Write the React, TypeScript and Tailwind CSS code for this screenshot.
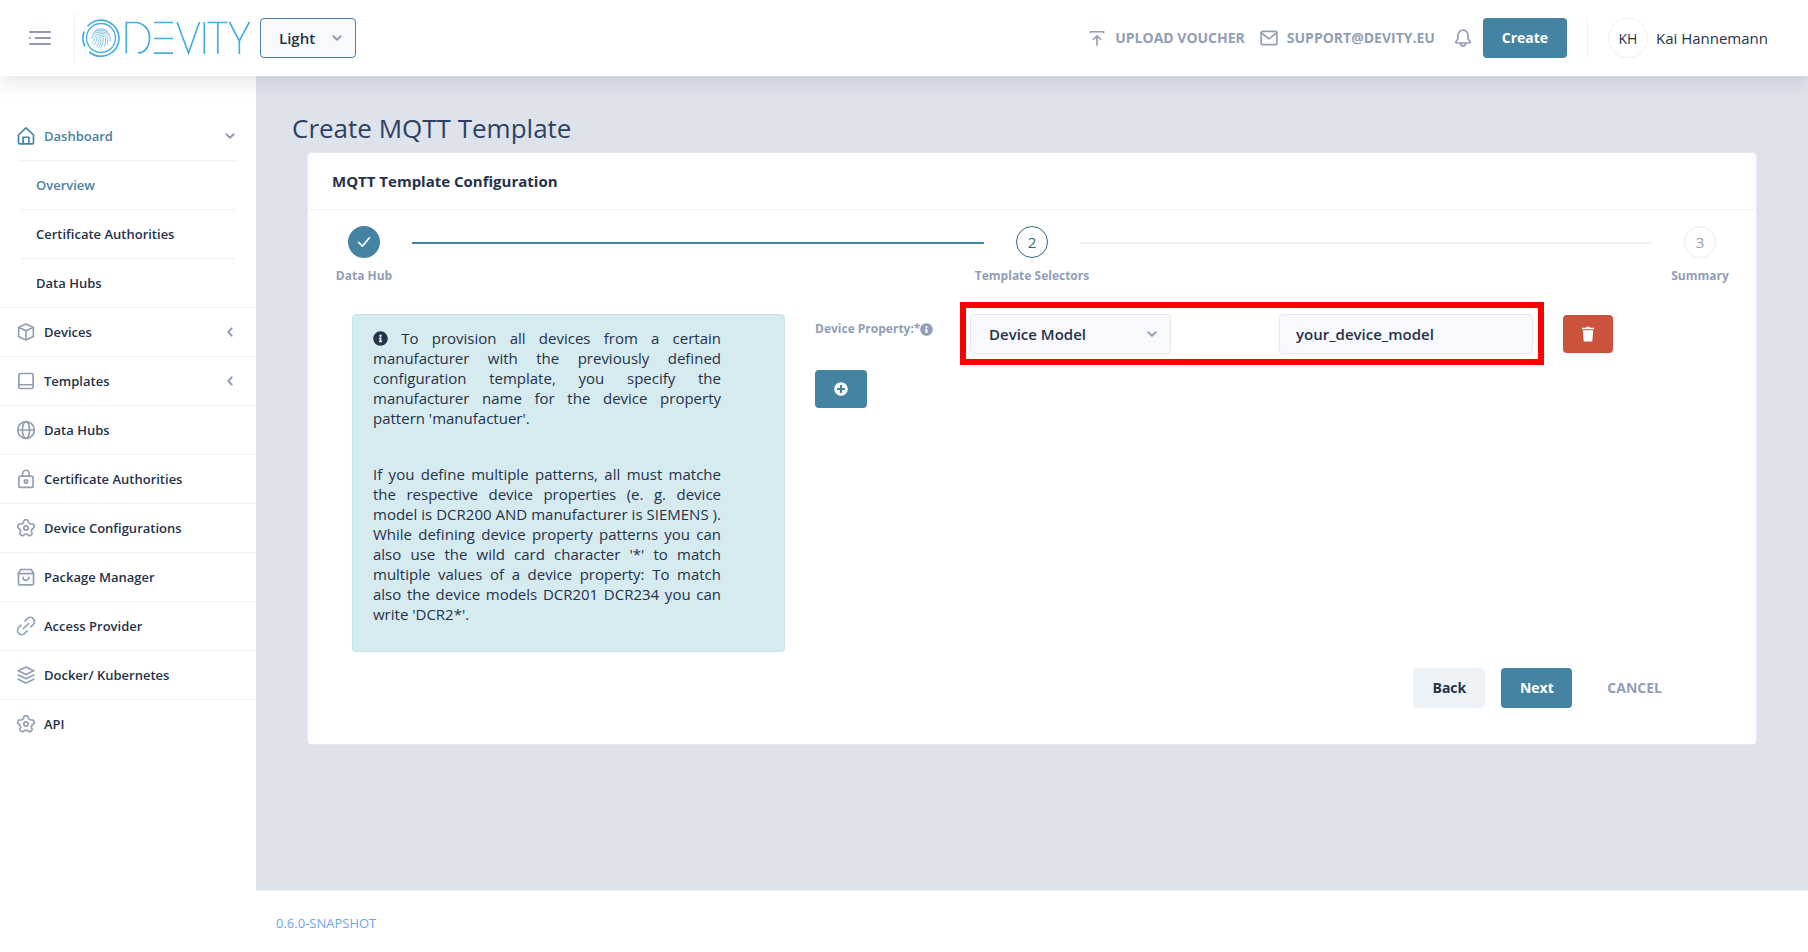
import { useState } from "react";
import type { ReactNode } from "react";
import { FaInfoCircle, FaPlusCircle } from "react-icons/fa";

type IconProps = { children: ReactNode; className?: string };

function Icon({ children, className = "size-5" }: IconProps) {
  return (
    <svg
      viewBox="0 0 24 24"
      fill="none"
      stroke="currentColor"
      strokeWidth="2"
      strokeLinecap="round"
      strokeLinejoin="round"
      aria-hidden="true"
      className={`shrink-0 ${className}`}
    >
      {children}
    </svg>
  );
}

// Outline of a five-lobed cog, sampled as a closed polyline.
const cogPoints = Array.from({ length: 90 }, (_, i) => {
  const angle = (i / 90) * Math.PI * 2;
  const wave = Math.cos(5 * angle);
  const radius = 8.7 + 1.6 * Math.tanh(1.8 * wave);
  return `${(12 + radius * Math.sin(angle)).toFixed(2)},${(12.3 - radius * Math.cos(angle)).toFixed(2)}`;
}).join(" ");

const icons = {
  home: (
    <>
      <path d="M3 10.800 12 2.200l9 8.600V20a1.500 1.500 0 0 1-1.500 1.500h-15A1.500 1.500 0 0 1 3 20z" />
      <path d="M8.500 21v-7.500h7V21" />
    </>
  ),
  cube: (
    <>
      <path d="M12 2.500 20.800 6.300v11L12 21.500 3.200 17.300v-11z" />
      <path d="M3.500 6.600 12 10.500l8.500-3.900M12 10.500V21" />
    </>
  ),
  book: (
    <>
      <rect x="3.500" y="3" width="17" height="18" rx="1.500" />
      <path d="M4 16.500h16" />
    </>
  ),
  globe: (
    <>
      <circle cx="12" cy="12" r="10" />
      <ellipse cx="12" cy="12" rx="4.300" ry="10" />
      <path d="M2.500 12h19" />
    </>
  ),
  lock: (
    <>
      <rect x="3.500" y="8.500" width="17" height="13.500" rx="2" />
      <path d="M8 8.500V5.500a4 4 0 0 1 8 0v3" />
      <circle cx="12" cy="15" r="2" />
    </>
  ),
  gear: (
    <>
      <polygon points={cogPoints} />
      <circle cx="12" cy="12" r="2.600" />
    </>
  ),
  bag: (
    <>
      <path d="M3 7.500 5.800 3h12.400L21 7.500V20a1.500 1.500 0 0 1-1.500 1.500h-15A1.500 1.500 0 0 1 3 20z" />
      <path d="M3 8h18M8.500 12.500a3.500 3.500 0 0 0 7 0" />
    </>
  ),
  link: (
    <>
      <path d="m9 15 6-6" />
      <path d="M10.800 5.800 13.500 3.200a4.900 4.900 0 0 1 7.200 7L18 13" />
      <path d="M6 11 3.300 13.800a4.900 4.900 0 0 0 7.200 7L13.200 18" />
    </>
  ),
  layers: (
    <>
      <path d="m12 2.500 9.300 4.500-9.300 4.500L2.700 7z" />
      <path d="m2.700 12 9.300 4.500 9.300-4.500" />
      <path d="m2.700 17 9.300 4.500 9.300-4.500" />
    </>
  ),
};

type NavItem = { label: string; icon: ReactNode; expandable?: boolean };

const navItems: NavItem[] = [
  { label: "Devices", icon: icons.cube, expandable: true },
  { label: "Templates", icon: icons.book, expandable: true },
  { label: "Data Hubs", icon: icons.globe },
  { label: "Certificate Authorities", icon: icons.lock },
  { label: "Device Configurations", icon: icons.gear },
  { label: "Package Manager", icon: icons.bag },
  { label: "Access Provider", icon: icons.link },
  { label: "Docker/ Kubernetes", icon: icons.layers },
  { label: "API", icon: icons.gear },
];

const subItems = ["Overview", "Certificate Authorities", "Data Hubs"];

function Logo() {
  return (
    <svg viewBox="0 0 168 38" className="h-[38px] w-[168px]" fill="none" stroke="#45aee0" role="img" aria-label="Devity">
      <path d="M5.500 7.200A18 18 0 1 1 7.300 33" strokeWidth="1.700" />
      <path d="M2.200 12.500A18 18 0 0 0 3 27.500" strokeWidth="1.700" />
      <circle cx="19" cy="19" r="14.500" strokeWidth="1.300" />
      <g stroke="#74b9dc" strokeWidth="0.900" strokeLinecap="round" strokeDasharray="5 1">
        <path d="M12.500 12.300c3.800-3.300 9.300-3.300 13 0M10.600 15.200c4-5.400 12.800-5.400 16.800 0" />
        <path d="M9.800 19.500c0-8.500 18.400-9 18.400 0v2.500M10.400 23.500c2-1 1.700-2.700 1.900-4.300.6-6.200 12.800-6.200 13.400.3.100 2 .1 4-.5 5.800" />
        <path d="M12 25.800c2.400-1.800 2.300-4 2.500-6.300.3-4 8.700-4 9 .3.100 3-.2 5.400-1.300 7.600" />
        <path d="M14.500 27.300c2-2.200 2.300-4.800 2.300-7.600.2-2 4.200-2 4.400.3.100 3.200-.6 6-2.200 8.300M17 28.300c1.500-2.300 2-5 2-8" />
      </g>
      <g strokeWidth="1.700">
        <path d="M44.300 34.500V3.500h8.700a14.500 14.500 0 0 1 14.500 15.500c0 9-5 15-11.500 15" />
        <path d="M72 3.500h19M72 19.500h19M72 34.200h19" />
        <path d="m95 3 11.500 31L117.500 3" />
        <path d="M122.300 3v32M125.500 3.500h20M135.800 3.500V35" />
        <path d="m147.500 3 9.800 19L167.500 3M157.300 22v13" />
      </g>
    </svg>
  );
}

function Chevron({ className = "size-4" }: { className?: string }) {
  return (
    <Icon className={className}>
      <path d="m6.500 9.500 5.500 5 5.500-5" strokeWidth="3" />
    </Icon>
  );
}

function Header() {
  const [theme, setTheme] = useState("Light");
  return (
    <header className="relative z-10 flex h-[76px] items-center justify-between bg-white pr-10 pl-7 shadow-[0_8px_16px_0_rgba(44,51,73,0.1)]">
      <div className="flex items-center">
        <button type="button" aria-label="Toggle menu" className="text-[#8f9bb3]">
          <svg viewBox="0 0 24 24" className="size-6" stroke="currentColor" strokeWidth="2" strokeLinecap="round" aria-hidden="true">
            <path d="M2 6h20M7.500 12H22M2 18h20M2 12h.01" />
          </svg>
        </button>
        <a href="#home" className="ml-[22px] flex h-[50px] items-center border-l border-[#edf1f5] pl-[7px]">
          <Logo />
        </a>
        <div className="relative ml-[10px]">
          <select
            aria-label="Theme"
            value={theme}
            onChange={(e) => setTheme(e.target.value)}
            className="h-10 w-24 appearance-none rounded border border-[#4583a3] bg-[#f7f9fc] pl-[18px] text-[15px] font-semibold"
          >
            <option>Light</option>
            <option>Dark</option>
          </select>
          <Chevron className="pointer-events-none absolute top-3 right-[11px] size-4 text-[#919eb5]" />
        </div>
      </div>

      <div className="flex items-center text-sm font-bold text-[#919eb5]">
        <a href="#voucher" className="flex items-center gap-2">
          <Icon>
            <path d="M4 4.500h16M4 4.500v1M20 4.500v1M12 20.500v-11M7.500 13.500 12 9.500l4.500 4" />
          </Icon>
          UPLOAD VOUCHER
        </a>
        <a href="mailto:support@devity.eu" className="ml-[14px] flex items-center gap-2">
          <Icon>
            <rect x="2.500" y="4" width="19" height="16" rx="2" />
            <path d="m3 6 9 7 9-7" />
          </Icon>
          SUPPORT@DEVITY.EU
        </a>
        <button type="button" aria-label="Notifications" className="ml-[18px]">
          <Icon>
            <path d="M12 2.500a6 6 0 0 0-6 6V13l-2.500 3.500c-.5.700 0 1.500.8 1.500h15.400c.8 0 1.300-.8.800-1.500L18 13V8.500a6 6 0 0 0-6-6zM9 18.500a3 3 0 0 0 6 0" />
          </Icon>
        </button>
        <button type="button" className="ml-[10px] h-10 w-[84px] rounded bg-[#4583a3] text-white">
          Create
        </button>
        <div className="ml-5 flex h-10 items-center gap-2 border-l border-[#edf1f5] pl-5 text-[15px] font-normal text-[#25324a]">
          <span className="flex size-10 items-center justify-center rounded-full border border-[#edf1f7] pt-px text-sm">KH</span>
          <span className="pt-px">Kai Hannemann</span>
        </div>
      </div>
    </header>
  );
}

function Sidebar() {
  return (
    <nav aria-label="Main" className="w-64 shrink-0 bg-white pt-9 text-[13px] leading-6 font-semibold">
      <ul>
        <li>
          <a href="#dashboard" className="flex h-12 items-center pr-[18px] pl-4 text-[#4583a3]">
            <Icon>{icons.home}</Icon>
            <span className="ml-2 grow">Dashboard</span>
            <Chevron className="size-4 text-[#919eb5]" />
          </a>
          <ul className="mx-5">
            {subItems.map((label) => (
              <li key={label} className="border-t border-[#edf1f5]">
                <a
                  href={`#${label}`}
                  className={label === "Overview" ? "block px-4 py-3 text-[#4583a3]" : "block px-4 py-3"}
                >
                  {label}
                </a>
              </li>
            ))}
          </ul>
        </li>
        {navItems.map((item) => (
          <li key={item.label} className="border-t border-[#edf1f5]">
            <a href={`#${item.label}`} className="flex h-12 items-center pr-[18px] pl-4">
              <span className="text-[#919eb5]">
                <Icon>{item.icon}</Icon>
              </span>
              <span className="ml-2 grow">{item.label}</span>
              {item.expandable && <Chevron className="size-4 rotate-90 text-[#919eb5]" />}
            </a>
          </li>
        ))}
      </ul>
    </nav>
  );
}

function Stepper() {
  const label = "mt-[10px] text-xs leading-4 font-bold whitespace-nowrap text-[#919eb5]";
  return (
    <ol className="flex px-10 pt-4 text-[15px]">
      <li className="flex w-8 flex-col items-center">
        <span className="flex size-8 shrink-0 items-center justify-center rounded-full bg-[#4583a3] text-white">
          <Icon className="size-5">
            <path d="m5.500 12.500 4.500 4.500 8.500-10" />
          </Icon>
        </span>
        <span className={label}>Data Hub</span>
      </li>
      <li aria-hidden="true" className="mx-8 mt-4 h-[2px] grow bg-[#4583a3]" />
      <li aria-current="step" className="flex w-8 flex-col items-center">
        <span className="flex size-8 shrink-0 items-center justify-center rounded-full border border-[#316987] text-[#316987]">2</span>
        <span className={label}>Template Selectors</span>
      </li>
      <li aria-hidden="true" className="mx-8 mt-4 h-[2px] grow bg-[#edf1f5]" />
      <li className="flex w-8 flex-col items-center">
        <span className="flex size-8 shrink-0 items-center justify-center rounded-full border border-[#e9ebf5] text-[#919eb5]">3</span>
        <span className={label}>Summary</span>
      </li>
    </ol>
  );
}

function HelpBox() {
  return (
    <aside className="w-[433px] shrink-0 rounded border border-[#c3e6eb] bg-[#d6ebf0] pt-[13px] pr-[63px] pb-[27px] pl-5 text-justify text-[15px] leading-5">
      <p>
        <FaInfoCircle className="inline size-[15px] align-[-2px]" aria-hidden="true" />
        {"  "}To provision all devices from a certain manufacturer with the previously defined configuration
        template, you specify the manufacturer name for the device property pattern 'manufactuer'.
      </p>
      <p className="mt-9">
        If you define multiple patterns, all must matche the respective device properties (e. g. device model is
        DCR200 AND manufacturer is SIEMENS ). While defining device property patterns you can also use the wild card
        character '*' to match multiple values of a device property: To match also the device models DCR201 DCR234
        you can write 'DCR2*'.
      </p>
    </aside>
  );
}

function PropertyForm() {
  const [property, setProperty] = useState("Device Model");
  const [value, setValue] = useState("your_device_model");
  return (
    <div>
      <div className="-mt-3 flex">
        <label htmlFor="property" className="mt-[19px] flex h-4 w-[145px] items-center text-xs font-bold text-[#919eb5]">
          Device Property:*
          <FaInfoCircle className="size-[13px]" aria-hidden="true" />
        </label>
        <div className="flex h-[63px] w-[584px] justify-between border-[6px] border-[#ff0000] pt-[6px] pr-[5px] pl-1">
          <div className="relative">
            <select
              id="property"
              value={property}
              onChange={(e) => setProperty(e.target.value)}
              className="h-10 w-[201px] appearance-none rounded border border-[#e4e9f2] bg-[#f7f9fc] pl-[18px] text-[15px] font-semibold"
            >
              <option>Device Model</option>
              <option>Manufacturer</option>
            </select>
            <Chevron className="pointer-events-none absolute top-3 right-[11px] size-4 text-[#919eb5]" />
          </div>
          <input
            type="text"
            aria-label="Property pattern"
            value={value}
            onChange={(e) => setValue(e.target.value)}
            className="h-10 w-[254px] rounded border border-[#e4e9f2] bg-[#f7f9fc] px-4 text-[15px] font-semibold"
          />
        </div>
        <button
          type="button"
          aria-label="Remove property"
          className="mt-[13px] ml-[19px] flex h-[38px] w-[50px] items-center justify-center rounded bg-[#cb533b] text-white"
        >
          <svg viewBox="0 0 14 16" className="h-4 w-3.5" fill="currentColor" aria-hidden="true">
            <path d="M1 1.800h3.700L5.500.800h3l.8 1H13V3.300H1zM1.800 4.300h10.400l-.8 10.300c0 .6-.5 1-1 1H3.600c-.5 0-1-.4-1-1z" />
          </svg>
        </button>
      </div>
      <button
        type="button"
        aria-label="Add property"
        className="mt-[5px] flex h-[38px] w-[52px] items-center justify-center rounded bg-[#4583a3] text-white"
      >
        <FaPlusCircle className="size-3.5" aria-hidden="true" />
      </button>
    </div>
  );
}

export default function App() {
  return (
    <div className="flex min-h-screen flex-col bg-white font-['Open_Sans',sans-serif] text-[15px] text-[#25324a]">
      <Header />
      <div className="flex grow">
        <Sidebar />
        <div className="flex grow flex-col">
          <main className="grow bg-[#dee2eb] pt-9 pr-[51px] pl-9">
            <h1 className="text-[26px] leading-8 text-[#2d4263]">Create MQTT Template</h1>
            <section className="mt-2 ml-[15px] rounded border border-[#e4e9f2] bg-white">
              <h2 className="border-b border-[#edf1f5] px-6 py-4 text-[15px] leading-6 font-bold">
                MQTT Template Configuration
              </h2>
              <Stepper />
              <div className="mt-[30px] flex gap-[30px] pl-11">
                <HelpBox />
                <PropertyForm />
              </div>
              <div className="mt-4 mb-9 flex justify-end pr-[94px] text-sm font-bold">
                <button type="button" className="h-10 w-[72px] rounded bg-[#edf2f7]">
                  Back
                </button>
                <button type="button" className="ml-4 h-10 w-[71px] rounded bg-[#4583a3] text-white">
                  Next
                </button>
                <button type="button" className="ml-[35px] h-10 text-[#919eb5]">
                  CANCEL
                </button>
              </div>
            </section>
          </main>
          <footer className="flex h-[62px] items-center border-t border-[#edf1f5] px-5 pt-1 text-[13px] text-[#6fa3ee]">
            <a href="#version">0.6.0-SNAPSHOT</a>
          </footer>
        </div>
      </div>
    </div>
  );
}
